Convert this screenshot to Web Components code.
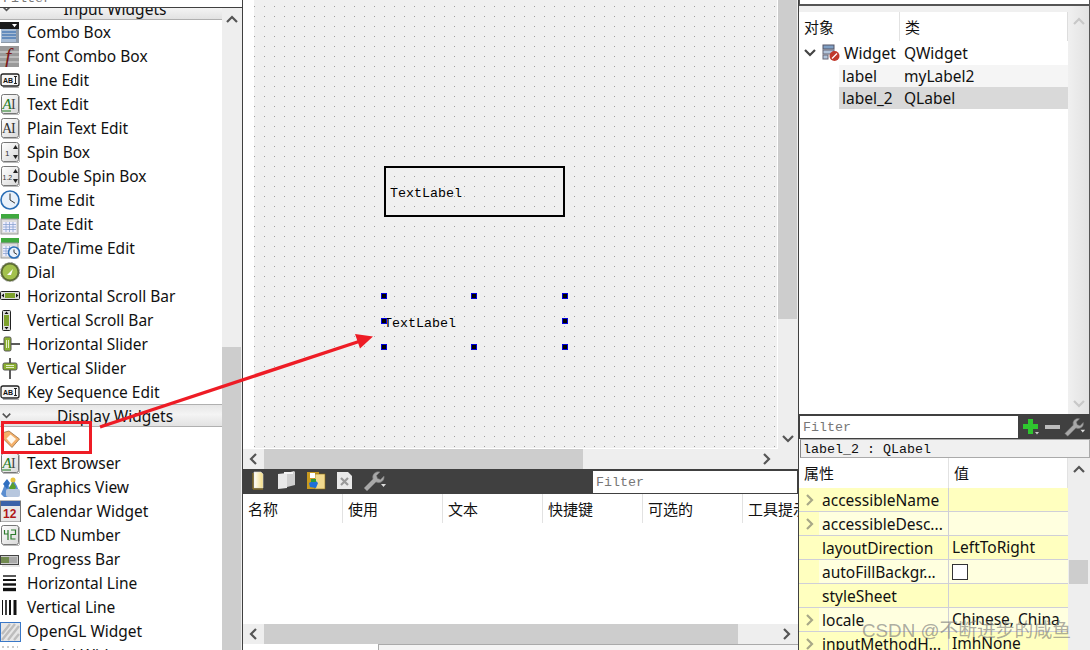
<!DOCTYPE html>
<html lang="zh"><head><meta charset="utf-8"><title>Qt Designer</title>
<style>
html,body{margin:0;padding:0;width:1090px;height:650px;overflow:hidden;background:#fff}
</style></head><body>
<qt-designer>
  <widget-box slot="left"></widget-box>
  <center-pane slot="center"></center-pane>
  <right-pane slot="right"></right-pane>
</qt-designer>
<script>
const UI='"Noto Sans","Noto Sans CJK SC",sans-serif';
const MONO='"Liberation Mono","Noto Sans CJK SC",monospace';
function def(name,css,html,init){
  customElements.define(name,class extends HTMLElement{
    constructor(){super();const r=this.attachShadow({mode:'open'});
      r.innerHTML='<style>'+css+'</style>'+(typeof html==='function'?html(this):html);}
    connectedCallback(){ if(this._done)return; this._done=1; if(init)init(this,this.shadowRoot); }
  });
}
const chev={
 up:'<path d="M1 7 L6 2 L11 7" fill="none" stroke="C" stroke-width="2.2"/>',
 down:'<path d="M1 2 L6 7 L11 2" fill="none" stroke="C" stroke-width="2.2"/>',
 left:'<path d="M7 1 L2 6 L7 11" fill="none" stroke="C" stroke-width="2.2"/>',
 right:'<path d="M2 1 L7 6 L2 11" fill="none" stroke="C" stroke-width="2.2"/>'};
function chevron(d,c){const h=d==='up'||d==='down';
  return `<svg width="${h?12:9}" height="${h?9:12}" viewBox="0 0 ${h?12:9} ${h?9:12}">${chev[d].replace('C',c)}</svg>`;}

const txt=(x,y,s,f,fs,extra='')=>`<text x="${x}" y="${y}" font-size="${fs}" fill="${f}" font-family="'Liberation Serif',serif" ${extra}>${s}</text>`;
const sans=(x,y,s,f,fs,extra='')=>`<text x="${x}" y="${y}" font-size="${fs}" fill="${f}" font-family="'Liberation Sans',sans-serif" font-weight="700" ${extra}>${s}</text>`;
const frame='<rect x="1.5" y="1.5" width="17" height="19" rx="2" fill="url(#g)" stroke="#777"/><path d="M3 21.5h16M19.5 3v18" stroke="#bbb"/>';
const grad='<defs><linearGradient id="g" x1="0" y1="0" x2="1" y2="1"><stop offset="0" stop-color="#fff"/><stop offset="1" stop-color="#d8d8d8"/></linearGradient></defs>';
const clock=(cx,cy,r)=>`<circle cx="${cx}" cy="${cy}" r="${r}" fill="#e9f1fa" stroke="#2a6db5" stroke-width="1.6"/><path d="M${cx} ${cy-r+2.5}V${cy}L${cx+r*.55} ${cy+r*.35}" fill="none" stroke="#333"/>`;
const calGrid='<rect x="1" y="6" width="17" height="15" fill="#ddd" stroke="#999"/><path d="M3 9h13v10H3z" fill="#eef"/><path d="M3 11.5h13M3 14h13M3 16.5h13M6 9v10M9.5 9v10M13 9v10" stroke="#8aa3d0" stroke-width=".8"/>';
const lineEd='<rect x="1" y="5" width="18" height="12" rx="2" fill="#f5f5f5" stroke="#222" stroke-width="1.3"/><path d="M3 18.5h16" stroke="#aaa"/>'+sans(3,14,'AB',"#111",7)+'<path d="M14 7.5h3M15.5 7.5v7M14 14.5h3" stroke="#111" fill="none" stroke-width=".9"/>';
const icons={
 combo:'<rect x="1" y="1" width="18" height="21" fill="#8e9aa8"/><rect x="0" y="1" width="19" height="7" fill="#1a1a1a"/><path d="M12 3h5l-2.5 3.2z" fill="#fff"/><rect x="1" y="8" width="15" height="13" fill="#a8bcd4"/><path d="M2 11h14M2 14h14M2 17h14" stroke="#4d7cb5" stroke-width="1.5"/>',
 font:'<rect x="0" y="1" width="19" height="21" fill="#9a9a9a"/><path d="M0 7h19M0 12h19M0 17h19" stroke="#bbb" stroke-width="2"/>'+txt(5,18,'f','#7d1a1a',22,'font-style="italic"'),
 line:lineEd,
 text:grad+frame+txt(2.5,16,'A','#1c7a1c',15,'font-style="italic"')+'<path d="M2 18h9" stroke="#1c7a1c"/>'+txt(11,16,'I','#444',14),
 plain:grad+frame+txt(2,16,'A','#333',14)+txt(11,16,'I','#333',14),
 spin:grad+frame+sans(5,15,'1','#333',8,'style="font-weight:400"')+'<path d="M13 8l2.5-4 2.5 4zM13 14l2.5 4 2.5-4z" fill="#222"/>',
 dspin:grad+frame+sans(2.5,14.5,'1.2','#333',7,'style="font-weight:400"')+'<path d="M13 8l2.5-4 2.5 4zM13 14l2.5 4 2.5-4z" fill="#222"/>',
 time:clock(10,11,9),
 date:'<rect x="1" y="1" width="18" height="5" fill="#3fa93f"/>'+calGrid,
 datetime:'<rect x="1" y="1" width="18" height="5" fill="#3fa93f"/>'+calGrid+clock(14,15.5,5.5),
 dial:'<circle cx="10" cy="11" r="9.5" fill="#5d6d33" stroke="#999" stroke-dasharray="2 1.5"/><circle cx="10" cy="11" r="7.5" fill="#a3c14d"/><path d="M7 14l6-6-2 6z" fill="#fff"/>',
 hscroll:'<rect x="0.5" y="6.5" width="19" height="8" rx="1" fill="#ddd" stroke="#222"/><rect x="5" y="8" width="10" height="5" fill="#7da12b"/><path d="M4 8.5v4l-2.5-2zM16 8.5v4l2.5-2z" fill="#111"/>',
 vscroll:'<rect x="2.5" y="1.5" width="8" height="20" rx="1" fill="#ddd" stroke="#222"/><rect x="4" y="6" width="5" height="11" fill="#7da12b"/><path d="M4.5 5l2-2.5 2 2.5zM4.5 18l2 2.5 2-2.5z" fill="#111"/>',
 hslider:'<path d="M0 11h20" stroke="#333" stroke-width="1.6"/><rect x="4" y="4" width="7" height="14" rx="1.5" fill="#8bb030" stroke="#555"/><path d="M6.5 7v8M8.5 7v8" stroke="#e4eec8"/>',
 vslider:'<path d="M10 1v21" stroke="#333" stroke-width="1.6"/><rect x="3" y="6" width="14" height="7" rx="1.5" fill="#8bb030" stroke="#555"/><path d="M6 8.5h8M6 10.5h8" stroke="#e4eec8"/>',
 key:lineEd,
 label:'<path d="M9 3L19.5 11 12 19.5 3 10.5 3.5 4.5z" fill="#f4b06a" stroke="#9a7040" stroke-width=".8"/><path d="M10.5 6.5L16 11 11.5 16 6.5 10.5z" fill="#fff9ee"/>',
 browser:grad+frame+txt(2.5,16,'A','#1c7a1c',15,'font-style="italic"')+'<path d="M2 18h9" stroke="#1c7a1c"/>'+txt(11,16,'I','#444',14),
 graphics:'<path d="M1 18L5 8l5 3 3-8 4 7 3 8-8 3H4z" fill="#5b8ed0"/><path d="M3 8l4-5 3 4-3 6z" fill="#2f6fc0"/><circle cx="13" cy="4" r="2.5" fill="#e7c33f"/><path d="M9 12l4-6 3 5-3 6z" fill="#5aa02c"/><rect x="6" y="13" width="14" height="8" rx="2" fill="#b7c7de"/>',
 calendar:'<rect x="0.5" y="1" width="20" height="21" fill="#e8e8e8" stroke="#777"/><rect x="1" y="1" width="19" height="5" fill="#3a62a8"/>'+sans(3,18,'12','#b01818',12),
 lcd:grad+frame+'<path d="M4.5 6v4h3.5M8 6v10M11 6h4.5v4.5H11V15h4.5" fill="none" stroke="#2c7a2c" stroke-width="1.2"/>',
 progress:'<rect x="0.5" y="7.5" width="18" height="9" fill="#ccc" stroke="#444"/><path d="M2 9v6M4 9v6M6 9v6M8 9v6" stroke="#4a6d1a" stroke-width="1.4"/><path d="M10 9v6M12 9v6M14 9v6M16 9v6" stroke="#9a9a9a" stroke-width="1.4"/><path d="M2 18h18" stroke="#ccc"/>',
 hline:'<path d="M3 4h13" stroke="#111" stroke-width="1.4"/><path d="M3 8h13" stroke="#111" stroke-width="2"/><path d="M3 12.5h13" stroke="#111" stroke-width="2.4"/><path d="M3 17.5h13" stroke="#111" stroke-width="3.4"/>',
 vline:'<path d="M2.5 4v15" stroke="#111"/><path d="M6 4v15" stroke="#111" stroke-width="1.6"/><path d="M10 4v15" stroke="#111" stroke-width="2"/><path d="M15 4v15" stroke="#111" stroke-width="3"/>',
 opengl:'<rect x="0.5" y="2.5" width="20" height="19" fill="#e6e6e6" stroke="#3a78c8"/><path d="M2 14L10 4M2 20L15 4M8 20L19 6M14 20L19 14" stroke="#bdbdbd" stroke-width="2.4"/>',
 qml:'<path d="M2 3h16" stroke="#999" stroke-dasharray="2 3"/>'
};

def('q-scroll',`
 :host{display:flex;background:#eee;flex:none;overflow:hidden;box-sizing:border-box}
 :host([orient=v]){flex-direction:column;width:20px}
 :host([orient=h]){flex-direction:row;height:20px}
 .a{flex:none;display:flex;align-items:center;justify-content:center}
 :host([orient=v]) .a{height:22px}
 :host([orient=h]) .a{width:21px}
 :host([orient=h]) .a.end{width:23px}
 .t{flex:1;display:flex;min-width:0;min-height:0}
 :host([orient=v]) .t{flex-direction:column}
 i{display:block;background:#cdcdcd;flex:none}
 :host([orient=v]) i{width:19px;margin-left:var(--thumb-left,0)}
 :host([orient=h]) i{height:100%}
 b{display:block;flex:none}
`,el=>{
  const v=el.getAttribute('orient')==='v',c=el.getAttribute('arrow')||'#555',sz=v?'height':'width';
  const st=el.hasAttribute('nostart')?'':`<div class="a">${chevron(v?'up':'left',c)}</div>`;
  const en=el.hasAttribute('noend')?'':`<div class="a end">${chevron(v?'down':'right',c)}</div>`;
  const th=el.getAttribute('thumb');
  return `${st}<div class="t"><b style="${sz}:${el.getAttribute('before')||0}px"></b>${th?`<i style="${sz}:${th}px"></i>`:''}</div>${en}`;
});

def('box-cat',`
 :host{display:flex;align-items:center;height:23px;box-sizing:border-box;border-top:1px solid #b0b0b0;border-bottom:1px solid #b0b0b0;
   background:linear-gradient(#e6e6e6,#f4f4f4 45%,#e2e2e2);position:relative;font:15.5px ${UI};color:#111;justify-content:center;flex:none;padding-left:8px}
 span.c{position:absolute;left:2px;top:7px;display:flex}
 span.t{line-height:21px;padding-top:1px}
`,`<span class="c">${chevron('down','#555').replace('width="12"','width="9"').replace('height="9"','height="7"')}</span><span class="t"><slot></slot></span>`);

def('box-item',`
 :host{display:flex;align-items:center;height:24px;flex:none;font:15.5px/24px ${UI};color:#111;white-space:nowrap}
 .i{flex:none;width:27px;height:24px;display:flex;align-items:center}
 .l{display:block;height:24px;margin-top:-1px}
 svg{display:block}
`,el=>`<span class="i"><svg width="21" height="22" viewBox="0 0 21 22">${icons[el.getAttribute('icon')]||''}</svg></span><span class="l"><slot></slot></span>`);

const W=[['combo','Combo Box'],['font','Font Combo Box'],['line','Line Edit'],['text','Text Edit'],['plain','Plain Text Edit'],['spin','Spin Box'],['dspin','Double Spin Box'],['time','Time Edit'],['date','Date Edit'],['datetime','Date/Time Edit'],['dial','Dial'],['hscroll','Horizontal Scroll Bar'],['vscroll','Vertical Scroll Bar'],['hslider','Horizontal Slider'],['vslider','Vertical Slider'],['key','Key Sequence Edit']];
const D=[['label','Label'],['browser','Text Browser'],['graphics','Graphics View'],['calendar','Calendar Widget'],['lcd','LCD Number'],['progress','Progress Bar'],['hline','Horizontal Line'],['vline','Vertical Line'],['opengl','OpenGL Widget'],['qml','QQuickWidget']];
const items=a=>a.map(([i,t])=>`<box-item icon="${i}">${t}</box-item>`).join('');

def('filter-strip',`
 :host{display:flex;align-items:flex-end;box-sizing:border-box;background:#fff;overflow:hidden;flex:none;font:13.33px/16px ${MONO};color:#777;padding-left:3px}
`,'<slot></slot>');

def('widget-box',`
 :host{display:flex;flex-direction:column;height:650px;border-right:1px solid #404040;box-sizing:border-box;overflow:hidden}
 filter-strip{height:8px;border-bottom:1px solid #404040}
 .m{flex:1;display:flex;min-height:0}
 .l{flex:1;min-width:0;overflow:hidden;display:flex;flex-direction:column}
 .s{margin-top:-11px;display:flex;flex-direction:column}
 q-scroll{height:100%;width:20px}
`,`<filter-strip>Filter</filter-strip>
 <div class="m"><div class="l"><div class="s"><box-cat>Input Widgets</box-cat>${items(W)}<box-cat>Display Widgets</box-cat>${items(D)}</div></div>
 <q-scroll orient="v" before="317" thumb="320" noend></q-scroll></div>`);

const dots="url(\"data:image/svg+xml,%3Csvg xmlns='http://www.w3.org/2000/svg' width='10' height='10'%3E%3Crect width='1' height='1' fill='%23a0a0a0'/%3E%3C/svg%3E\")";
def('form-label',`
 :host{position:absolute;box-sizing:border-box;display:flex;align-items:center;font:13.33px ${MONO};color:#000;padding-top:3px}
 :host([framed]){border:2px solid #000;padding-left:4px}
`,'<slot></slot>');
def('sel-handle',`
 :host{position:absolute;width:6px;height:6px;box-sizing:border-box;background:#000;border:1px solid #0000e0}
`,'');
def('form-canvas',`
 :host{display:block;position:relative;flex:1;min-width:0;background:#f0f0f0 ${dots} 0 6px;overflow:hidden}
`,`<form-label framed style="left:130px;top:166px;width:181px;height:51px">TextLabel</form-label>
 <form-label style="left:130px;top:296px;width:181px;height:51px">TextLabel</form-label>
 ${[[127,293],[217,293],[308,293],[127,318],[308,318],[127,344],[217,344],[308,344]].map(([x,y])=>`<sel-handle style="left:${x}px;top:${y}px"></sel-handle>`).join('')}`);

def('head-row',`
 :host{display:flex;flex:none;background:#fff;font:15px ${UI};color:#111;overflow:hidden}
`,'<slot></slot>');
def('head-cell',`
 :host{display:flex;align-items:center;box-sizing:border-box;flex:none;height:29px;padding-left:5px;padding-bottom:1px;border-right:1px solid #e2e2e2;white-space:nowrap;overflow:hidden}
`,'<slot></slot>');

const tool={
 page:'<path d="M3 1h7l2 2v14H3z" fill="url(#y)" stroke="#ddd" stroke-width=".6"/><path d="M2 2v16h10" fill="none" stroke="#a08020"/><defs><linearGradient id="y" x1="0" x2="1"><stop offset="0" stop-color="#fff"/><stop offset="1" stop-color="#f3dc82"/></linearGradient></defs>',
 copy:'<path d="M1 3l9-1v15l-9 1z" fill="#e8e8e8"/><path d="M10 2l7-2 1 1v13l-8 2z" fill="#cfcfcf"/><path d="M7 1h9v2H7z" fill="#f4f4f4"/>',
 paste:'<rect x="1" y="1" width="12" height="17" fill="#c99a1f"/><rect x="9" y="3" width="10" height="15" fill="#f1d98e" stroke="#8a6a10" stroke-width=".6"/><rect x="4" y="2" width="5" height="5" fill="#fff"/><path d="M3 12l6-3 3 3-2 5-6-1z" fill="#1f6fd8"/><path d="M5 8h5v3H5z" fill="#2a9a3a"/>',
 del:'<path d="M1 1h11l4 4v13H1z" fill="#e9e9e9"/><path d="M5 7l7 7M12 7l-7 7" stroke="#9a9a9a" stroke-width="2.2"/>',
 wrench:'<path d="M1 17L10 8A5.5 5.5 0 0 1 17 1L13.5 4.5 14.5 7.5 17.5 8.5 21 5A5.5 5.5 0 0 1 13 11L4 20Z" fill="#a8a8a8" stroke="#777" stroke-width=".6"/><path d="M18 13h5l-2.5 3z" fill="#ddd"/>',
};
const ti=(n,w)=>`<svg width="${w}" height="21" viewBox="0 0 ${w} 21" style="flex:none;display:block">${tool[n]}</svg>`;

def('action-bar',`
 :host{display:flex;align-items:center;height:25px;background:#404040;flex:none;box-sizing:border-box}
 .ic{flex:1;display:flex;align-items:center;padding-left:8px}
 filter-strip{width:204px;height:22px;align-items:center;margin-right:1px;padding-left:3px;padding-top:3px}
`,`<div class="ic">${ti('page',26)}${ti('copy',29)}${ti('paste',30)}${ti('del',27)}${ti('wrench',25)}</div><filter-strip>Filter</filter-strip>`);

def('center-pane',`
 :host{display:flex;flex-direction:column;height:650px;border-right:1px solid #404040;box-sizing:border-box;overflow:hidden;background:#fff}
 .top{flex:none;height:449px;display:flex}
 .cw{flex:1;display:flex;min-width:0;background:#fff;padding:0 1px 1px 11px}
 .hs{display:flex;flex:none}
 .hs q-scroll{flex:1;min-width:0}
 .corner{width:20px;background:#eee}
 .body{flex:1;background:#fff;min-height:0}
 .foot{flex:none;height:5px;display:flex;border-top:1px solid #aaa;background:#fff}
 .foot i{display:block;width:135px;margin-top:-1px;background:#fff}
 .foot b{flex:1;background:#f4f4f4;border-left:1px solid #aaa}
 head-cell{width:100px}
`,`<div class="top"><div class="cw"><form-canvas></form-canvas></div><q-scroll orient="v" before="0" thumb="319" nostart></q-scroll></div>
 <div class="hs"><q-scroll orient="h" before="0" thumb="319"></q-scroll><div class="corner"></div></div>
 <action-bar></action-bar>
 <head-row><head-cell>名称</head-cell><head-cell>使用</head-cell><head-cell>文本</head-cell><head-cell>快捷键</head-cell><head-cell>可选的</head-cell><head-cell>工具提示</head-cell></head-row>
 <div class="body"></div>
 <div class="hs"><q-scroll orient="h" before="0" thumb="474"></q-scroll></div>
 <div class="foot"><i></i><b></b></div>`);

def('obj-row',`
 :host{display:flex;align-items:center;font:15.5px ${UI};color:#111;white-space:nowrap;box-sizing:border-box;flex:none;height:22px;padding-bottom:1px;padding-left:var(--pl,40px)}
 span{width:65px;padding-left:3px;flex:none;box-sizing:border-box}
`,el=>`<span>${el.getAttribute('a')}</span>${el.getAttribute('b')}`);

const objIcon='<svg width="18" height="18" viewBox="0 0 18 18" style="display:block;flex:none"><rect x="1" y="1" width="11" height="4" fill="#7f9fc4" stroke="#556"/><rect x="1" y="6" width="11" height="4" fill="#b3c5dc" stroke="#667"/><rect x="1" y="11" width="5" height="4" fill="#b3c5dc" stroke="#667"/><circle cx="12.5" cy="12" r="5" fill="#c0392b"/><path d="M10 14.5l5-5" stroke="#fff" stroke-width="1.3"/></svg>';

def('obj-inspector',`
 :host{display:flex;height:414px;flex:none;box-sizing:border-box;flex-direction:column;background:#fff;border-right:1px solid #555;overflow:hidden}
 filter-strip{height:6px;border-bottom:2px solid #555;border-left:1px solid #555}
 .g{height:6px;background:#f0f0f0;flex:none}
 .m{flex:1;display:flex;min-height:0}
 .t{flex:1;min-width:0;display:flex;flex-direction:column}
 head-cell:first-child{width:101px} head-cell:last-child{width:168px;border-right:1px solid #ddd}
 .w{display:flex;align-items:center;height:23px;font:15.5px ${UI};color:#111;white-space:nowrap;margin-top:1px;flex:none;box-sizing:border-box;padding-bottom:2px}
 .w .ch{width:23px;padding-left:5px;box-sizing:border-box;display:flex;flex:none}
 .w .n{padding-left:4px;width:64px;box-sizing:border-box;flex:none}
 .a{background:#f5f5f5;margin-left:40px} .b{background:#d9d9d9;margin-left:40px}
 obj-row{--pl:0px}
 q-scroll{width:21px;height:auto;background:linear-gradient(90deg,#f0f0f0,#e2e2e2);margin-top:-6px;padding-top:4px}
`,`<filter-strip>Filter</filter-strip><div class="g"></div>
 <div class="m"><div class="t"><head-row><head-cell>对象</head-cell><head-cell>类</head-cell></head-row>
 <div class="w"><span class="ch">${chevron('down','#444')}</span>${objIcon}<span class="n">Widget</span>QWidget</div>
 <obj-row class="a" a="label" b="myLabel2"></obj-row><obj-row class="b" a="label_2" b="QLabel"></obj-row></div>
 <q-scroll orient="v" arrow="#c8c8c8"></q-scroll></div>`);

def('prop-row',`
 :host{display:flex;height:24px;box-sizing:border-box;border-bottom:1px solid #cfcfd8;background:var(--bg);font:15.5px ${UI};color:#111;white-space:nowrap;flex:none}
 :host([alt]){--bg:#ffffdf}
 :host(:not([alt])){--bg:#ffffbf}
 .b{flex:none;width:20px;background:#ffffbf;display:flex;align-items:center;padding-left:6px;box-sizing:border-box}
 .n{flex:none;width:130px;padding-left:3px;border-right:1px solid #cfcfd8;box-sizing:border-box;line-height:25px;overflow:hidden}
 .v{flex:1;padding-left:3px;display:flex;align-items:center;overflow:hidden;line-height:25px}
 .k{width:16px;height:16px;background:#fff;border:1px solid #333;box-sizing:border-box;display:block}
`,el=>`<div class="b">${el.hasAttribute('exp')?chevron('right','#a8a888'):''}</div><div class="n">${el.getAttribute('n')}</div><div class="v">${el.hasAttribute('check')?'<i class="k"></i>':(el.getAttribute('v')||'')}</div>`);

def('prop-editor',`
 :host{display:flex;flex:1;min-height:0;flex-direction:column;background:#fff;overflow:hidden}
 .tb{flex:none;height:25px;background:#404040;display:flex;align-items:center;box-sizing:border-box;padding-left:1px;gap:4px}
 .tb filter-strip{width:218px;height:22px;align-items:center;padding-left:3px;padding-top:3px}
 .tb .ic{display:flex;align-items:center;gap:3px;padding-left:0}
 .cls{flex:none;height:19px;box-sizing:border-box;border:1px solid #aaa;border-left-color:#888;background:#f0f0f0;margin-left:1px;font:13.33px/19px ${MONO};color:#111;padding-left:2px;overflow:hidden}
 .m{flex:1;display:flex;min-height:0}
 .t{flex:1;min-width:0;display:flex;flex-direction:column;overflow:hidden}
 head-cell{height:30px} head-cell:first-child{width:150px} head-cell:last-child{width:119px}
 q-scroll{height:auto;width:22px;--thumb-left:1px}
`,`<div class="tb"><filter-strip>Filter</filter-strip><div class="ic">
   <svg width="18" height="18" viewBox="0 0 18 18"><path d="M6 1h5v5h5v5h-5v5H6v-5H1V6h5z" fill="#2fc62f"/><path d="M13 14h4l-2 2.5z" fill="#ccc"/></svg>
   <svg width="18" height="18" viewBox="0 0 18 18"><rect x="2" y="7" width="15" height="4" fill="#bdbdbd"/></svg>
   <svg width="22" height="20" viewBox="0 0 24 20">${tool.wrench}</svg></div></div>
 <div class="cls">label_2 : QLabel</div>
 <div class="m"><div class="t"><head-row><head-cell>属性</head-cell><head-cell>值</head-cell></head-row>
  <prop-row exp n="accessibleName"></prop-row>
  <prop-row exp alt n="accessibleDesc..."></prop-row>
  <prop-row n="layoutDirection" v="LeftToRight"></prop-row>
  <prop-row alt n="autoFillBackgr..." check></prop-row>
  <prop-row n="styleSheet"></prop-row>
  <prop-row exp alt n="locale" v="Chinese, China"></prop-row>
  <prop-row exp n="inputMethodH..." v="ImhNone"></prop-row>
 </div><q-scroll orient="v" before="80" thumb="24" noend></q-scroll></div>`);

def('right-pane',`
 :host{display:flex;flex-direction:column;height:650px;overflow:hidden;background:#fff}
`,`<obj-inspector></obj-inspector><prop-editor></prop-editor>`);

def('qt-designer',`
 :host{display:grid;grid-template-columns:243px 556px 291px;width:1090px;height:650px;position:relative;overflow:hidden}
 .rect{position:absolute;left:1px;top:421px;width:91px;height:33px;box-sizing:border-box;border:3px solid #ee1c25;pointer-events:none}
 svg.arrow{position:absolute;left:0;top:0;pointer-events:none}
 .wm{position:absolute;left:862px;top:619px;font:18.8px "Liberation Sans","Noto Sans CJK SC",sans-serif;color:rgba(120,120,120,.62);white-space:nowrap;line-height:24px}
`,`<slot name="left"></slot><slot name="center"></slot><slot name="right"></slot>
 <div class="rect"></div>
 <svg class="arrow" width="1090" height="650"><path d="M100 427L362 340.5" stroke="#ee1c25" stroke-width="3.4"/><path d="M373 336.5L355 334L360 348.5Z" fill="#ee1c25"/></svg>
 <div class="wm">CSDN @不断进步的咸鱼</div>`);
</script>
</body></html>
